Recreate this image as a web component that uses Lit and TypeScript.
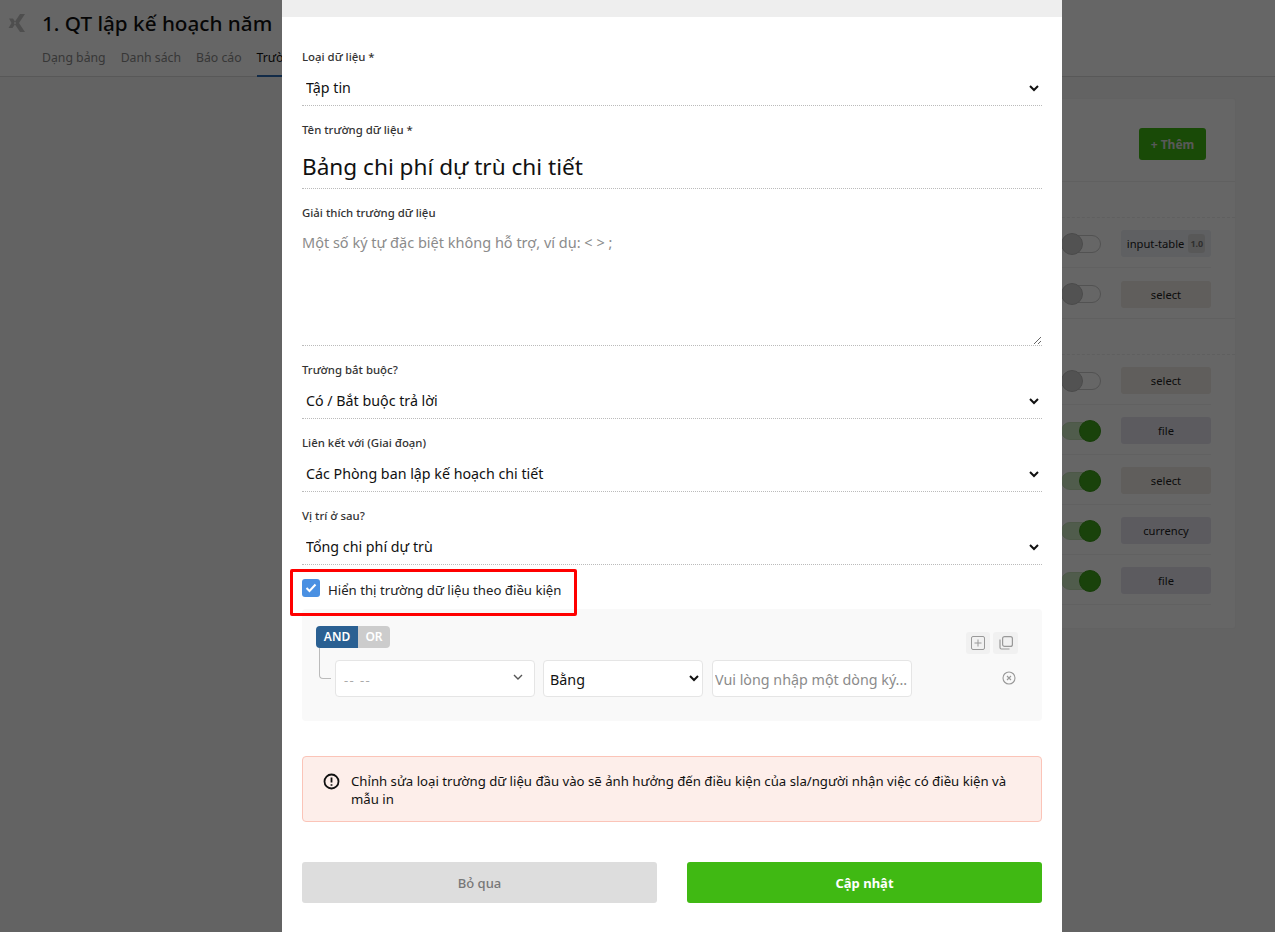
import { LitElement, html, css } from "lit";
import { customElement } from "lit/decorators.js";

const rows1 = [
  { on: false, type: "input-table", tone: "blue", badge: "1.0" },
  { on: false, type: "select", tone: "tan" },
];
const rows2 = [
  { on: false, type: "select", tone: "tan" },
  { on: true, type: "file", tone: "purple" },
  { on: true, type: "select", tone: "tan" },
  { on: true, type: "currency", tone: "purple" },
  { on: true, type: "file", tone: "purple" },
];

@customElement("app-root")
export class AppRoot extends LitElement {
  static styles = css`
    :host {
      display: block;
      position: relative;
      width: 1275px;
      height: 932px;
      overflow: hidden;
      background: #f8f8f8;
      font-family: "Noto Sans", "Open Sans", sans-serif;
      color: #111;
    }
    * { box-sizing: border-box; }
    .top {
      height: 77px;
      background: #fff;
      border-bottom: 1px solid #ddd;
      padding: 0 0 0 8px;
      display: flex;
      gap: 16px;
    }
    .logo { margin-top: 13px; flex: none; }
    .title { font-size: 20.7px; line-height: 28px; margin: 9px 0 0; font-weight: 500; white-space: nowrap; }
    .tabs { display: flex; gap: 15px; margin-top: 11px; font-size: 12.25px; color: #8a8a8a; }
    .tabs span { height: 29px; line-height: 20px; white-space: nowrap; }
    .tabs .active { color: #111; border-bottom: 2px solid #2d6cb5; }
    .content { padding: 21px 39px 0 300px; }
    .card {
      background: #fff;
      border: 1px solid #f4f4f4;
      border-radius: 3px;
      height: 531px;
    }
    .card-head { height: 83px; display: flex; justify-content: flex-end; align-items: flex-start; padding: 29px 29px 0 0; border-bottom: 1px solid #f0f0f0; }
    .add { width: 67px; height: 32px; border-radius: 3px; background: #40b913; color: #ddd; font-size: 12px; font-weight: 700; display: flex; align-items: center; justify-content: center; }
    .band { height: 36px; border-bottom: 1px dashed #eee; }
    .band.ruled { border-top: 1px solid #f0f0f0; height: 37px; }
    .rows { padding-right: 24px; }
    .row { height: 50px; display: flex; align-items: center; justify-content: flex-end; gap: 20px; border-bottom: 1px solid #f2f2f2; padding-top: 2px; }
    .rows.first .row:last-child { border-bottom: 0; }
    .toggle { position: relative; width: 40px; height: 18px; border-radius: 9px; border: 1px solid #ccc; background: #fff; }
    .toggle.on { background: #c8e6bd; border-color: #c0dcb5; }
    .knob { position: absolute; left: -1px; top: -3px; width: 22px; height: 22px; border-radius: 50%; background: #ccc; border: 1px solid #bbb; }
    .toggle.on .knob { left: auto; right: -1px; background: #3fa51c; border-color: #3a9a18; }
    .pill { width: 90px; height: 27px; border-radius: 3px; font-size: 11.2px; display: flex; align-items: center; justify-content: center; gap: 4px; color: #222; }
    .pill.blue { background: #edeff6; }
    .pill.tan { background: #f0ebe5; }
    .pill.purple { background: #e6e4ee; }
    .badge { background: #ddd; border-radius: 3px; font-size: 9px; font-weight: 700; padding: 3px 2px; color: #777; }

    .overlay {
      position: absolute;
      inset: 0;
      background: rgba(0, 0, 0, 0.6);
      padding-left: 282px;
    }
    .modal { width: 780px; height: 932px; background: #fff; }
    .modal-head { height: 17px; background: #eee; }
    .form { padding: 31px 20px 0; display: flex; flex-direction: column; }
    .field { margin-bottom: 15px; }
    label.cap { display: block; height: 16px; line-height: 18px; font-size: 11.4px; font-weight: 500; color: #333; margin-bottom: 6px; }
    .line { display: block; width: 100%; border: 0; border-bottom: 1px dotted #bbb; background: #fff; outline: 0; font-family: inherit; color: #111; }
    select.line { height: 36px; font-size: 14.25px; padding: 0; }
    input.line { height: 46px; font-size: 22.6px; padding: 2px 0 0; }
    textarea.line { height: 120px; font-size: 14.5px; padding: 6px 0 0; line-height: 20px; resize: vertical; }
    ::placeholder { color: #8b8b8b; opacity: 1; }
    .check { position: relative; margin-top: -1px; height: 18px; display: flex; align-items: center; gap: 8px; font-size: 13.2px; line-height: 20px; color: #222; }
    .check-text { padding-top: 4px; }
    .box { width: 18px; height: 18px; border-radius: 3px; background: #4a90e2; display: flex; align-items: center; justify-content: center; }
    .mark { position: absolute; z-index: 2; left: -12px; top: -10px; width: 287px; height: 47px; border: 3px solid #f00; border-radius: 2px; pointer-events: none; }
    .cond { position: relative; margin-top: 12px; height: 112px; background: #f9f9f9; border-radius: 4px; padding: 17px 14px 0; }
    .andor { display: flex; width: 74px; height: 22px; border-radius: 4px; overflow: hidden; font-size: 12px; font-weight: 600; color: #fff; line-height: 22px; text-align: center; }
    .andor b { width: 42px; background: #2a6092; font-weight: 600; }
    .andor i { width: 32px; background: #ccc; font-style: normal; }
    .link { position: absolute; left: 17px; top: 39px; width: 12px; height: 31px; border-left: 1px solid #bbb; border-bottom: 1px solid #bbb; border-bottom-left-radius: 4px; }
    .clause { display: flex; gap: 8px; margin: 12px 0 0 19px; }
    .ctl { height: 37px; width: 200px; border: 1px solid #e5e5e5; border-radius: 4px; background: #fff; font-family: inherit; font-size: 14.3px; color: #111; outline: 0; }
    .fake { display: flex; align-items: center; justify-content: space-between; padding: 0 11px 4px 8px; color: #aaa; font-size: 13px; letter-spacing: 1.4px; width: 200px; }
    .fake span { padding-top: 6px; }
    select.ctl { width: 160px; padding: 2px 0 0 2px; }
    input.ctl { padding: 2px 2px 0; margin-left: 1px; }
    .tools { position: absolute; left: 664px; top: 23px; display: flex; gap: 3px; }
    .tool { width: 24px; height: 22px; background: #f1f1f1; border-radius: 3px; display: flex; align-items: center; justify-content: center; }
    .tool + .tool { width: 25px; }
    .remove { position: absolute; left: 700px; top: 62px; display: flex; }
    .alert { margin-top: 35px; height: 66px; background: #fdeeea; border: 1px solid #fbc4b8; border-radius: 4px; padding: 15px 20px 0 20px; display: flex; gap: 11px; font-size: 13.2px; line-height: 18px; color: #111; }
    .alert svg { flex: none; margin-top: 1px; }
    .actions { margin-top: 40px; display: grid; grid-template-columns: 355px 355px; justify-content: space-between; }
    .btn { height: 41px; border-radius: 3px; font-size: 13px; display: flex; align-items: center; justify-content: center; }
    .btn.ghost { background: #ddd; color: #777; font-weight: 500; }
    .btn.ok { background: #40b913; color: #fff; font-weight: 700; }
  `;

  private renderRow(r: { on: boolean; type: string; tone: string; badge?: string }) {
    return html`<div class="row">
      <div class="toggle ${r.on ? "on" : ""}"><div class="knob"></div></div>
      <div class="pill ${r.tone}">${r.type}${r.badge ? html`<span class="badge">${r.badge}</span>` : ""}</div>
    </div>`;
  }

  render() {
    return html`
      <div class="top">
        <svg class="logo" width="18" height="20" viewBox="0 0 18 20">
          <path d="M1 5.5h4l3 4.5-3.5 5H.5l3-5z M17 1h-5L6 10l6 9h5l-6-9z" fill="#c4c4c4"></path>
        </svg>
        <div>
          <h1 class="title">1. QT lập kế hoạch năm</h1>
          <div class="tabs">
            <span>Dạng bảng</span><span>Danh sách</span><span>Báo cáo</span>
            <span class="active">Trường dữ liệu</span>
          </div>
        </div>
      </div>
      <div class="content">
        <div class="card">
          <div class="card-head"><div class="add">+ Thêm</div></div>
          <div class="band"></div>
          <div class="rows first">${rows1.map((r) => this.renderRow(r))}</div>
          <div class="band ruled"></div>
          <div class="rows">${rows2.map((r) => this.renderRow(r))}</div>
        </div>
      </div>
      <div class="overlay">
        <div class="modal">
          <div class="modal-head"></div>
          <div class="form">
            <div class="field">
              <label class="cap">Loại dữ liệu *</label>
              <select class="line"><option>Tập tin</option></select>
            </div>
            <div class="field">
              <label class="cap">Tên trường dữ liệu *</label>
              <input class="line" .value=${"Bảng chi phí dự trù chi tiết"} />
            </div>
            <div class="field">
              <label class="cap">Giải thích trường dữ liệu</label>
              <textarea class="line" placeholder="Một số ký tự đặc biệt không hỗ trợ, ví dụ: < > ;"></textarea>
            </div>
            <div class="field">
              <label class="cap">Trường bắt buộc?</label>
              <select class="line"><option>Có / Bắt buộc trả lời</option></select>
            </div>
            <div class="field">
              <label class="cap">Liên kết với (Giai đoạn)</label>
              <select class="line"><option>Các Phòng ban lập kế hoạch chi tiết</option></select>
            </div>
            <div class="field">
              <label class="cap">Vị trí ở sau?</label>
              <select class="line"><option>Tổng chi phí dự trù</option></select>
            </div>
            <div class="check">
              <span class="box">
                <svg width="12" height="10" viewBox="0 0 12 10"><path d="M1.5 5l3 3 6-6.5" fill="none" stroke="#fff" stroke-width="2"></path></svg>
              </span>
              <span class="check-text">Hiển thị trường dữ liệu theo điều kiện</span>
              <div class="mark"></div>
            </div>
            <div class="cond">
              <div class="andor"><b>AND</b><i>OR</i></div>
              <div class="link"></div>
              <div class="clause">
                <div class="ctl fake">
                  <span>-- --</span>
                  <svg width="10" height="6" viewBox="0 0 10 6"><path d="M1 1l4 4 4-4" fill="none" stroke="#555" stroke-width="1.4"></path></svg>
                </div>
                <select class="ctl"><option>Bằng</option></select>
                <input class="ctl" placeholder="Vui lòng nhập một dòng ký..." />
              </div>
              <div class="tools">
                <div class="tool">
                  <svg width="14" height="14" viewBox="0 0 14 14" fill="none" stroke="#999" stroke-width="1"><rect x=".5" y=".5" width="13" height="13" rx="1.5"></rect><path d="M7 3.5v7M3.5 7h7"></path></svg>
                </div>
                <div class="tool">
                  <svg width="14" height="14" viewBox="0 0 14 14" fill="none" stroke="#999" stroke-width="1.2"><rect x="3.6" y=".6" width="9.8" height="9.8" rx="2"></rect><path d="M1 3.5v8a1.5 1.5 0 0 0 1.5 1.5h8"></path></svg>
                </div>
              </div>
              <div class="remove">
                <svg width="14" height="14" viewBox="0 0 14 14" fill="none" stroke="#999" stroke-width="1.1"><circle cx="7" cy="7" r="6"></circle><path d="M5 5l4 4M9 5l-4 4"></path></svg>
              </div>
            </div>
            <div class="alert">
              <svg width="17" height="17" viewBox="0 0 17 17" fill="none" stroke="#111" stroke-width="1.8"><circle cx="8.5" cy="8.5" r="7"></circle><path d="M8.5 4.5v5M8.5 11.2v1.6"></path></svg>
              <div>Chỉnh sửa loại trường dữ liệu đầu vào sẽ ảnh hưởng đến điều kiện của sla/người nhận việc có điều kiện và mẫu in</div>
            </div>
            <div class="actions">
              <div class="btn ghost">Bỏ qua</div>
              <div class="btn ok">Cập nhật</div>
            </div>
          </div>
        </div>
      </div>
    `;
  }
}
